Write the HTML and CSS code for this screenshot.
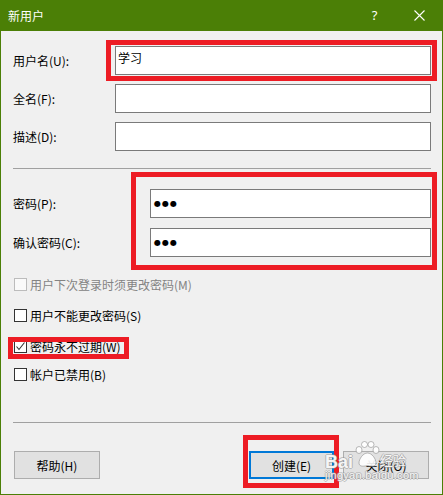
FILE: index.html
```html
<!DOCTYPE html>
<html lang="zh-CN">
<head>
    <meta charset="UTF-8">
    <title>新用户</title>
    <link rel="stylesheet" href="styles.css">
</head>
<body>
    <div class="window">
        <div class="titlebar">
            <span class="title">新用户</span>
            <span class="ctrl help">?</span>
            <span class="ctrl close">
                <svg width="11" height="11" viewBox="0 0 11 11">
                    <path d="M0.5 0.5 L10.5 10.5 M10.5 0.5 L0.5 10.5" stroke="#fff" stroke-width="1.1" fill="none" />
                </svg>
            </span>
        </div>

        <div class="client">
            <div class="fields account">
                <label>用户名(U):</label>
                <div class="input">学习</div>
                <label>全名(F):</label>
                <div class="input"></div>
                <label>描述(D):</label>
                <div class="input"></div>
            </div>

            <div class="sep"></div>

            <div class="fields password">
                <label>密码(P):</label>
                <div class="input"><span class="dots">●●●</span></div>
                <label>确认密码(C):</label>
                <div class="input"><span class="dots">●●●</span></div>
            </div>

            <div class="checks">
                <div class="check disabled"><span class="box"></span>用户下次登录时须更改密码(M)</div>
                <div class="check"><span class="box"></span>用户不能更改密码(S)</div>
                <div class="check">
                    <span class="box">
                        <svg width="11" height="11" viewBox="0 0 11 11">
                            <path d="M1.5 5.5 L4 8.5 L9.5 1.5" stroke="#333" stroke-width="1.1" fill="none" />
                        </svg>
                    </span>密码永不过期(W)
                </div>
                <div class="check last"><span class="box"></span>帐户已禁用(B)</div>
            </div>

            <div class="footer">
                <div class="sep"></div>
                <div class="buttons">
                    <button class="btn">帮助(H)</button>
                    <span class="spacer"></span>
                    <button class="btn default">创建(E)</button>
                    <button class="btn">关闭(O)</button>
                </div>
            </div>
        </div>

        <!-- red annotation frames -->
        <div class="mark mark-user"></div>
        <div class="mark mark-pass"></div>
        <div class="mark mark-expire"></div>
        <div class="mark mark-create"></div>

        <!-- baidu jingyan watermark -->
        <div class="watermark">
            <div class="wm-row">
                <span class="wm-bai">Bai</span>
                <svg class="wm-paw" width="25" height="27" viewBox="0 0 25 27">
                    <g fill="rgba(255,255,255,0.9)" stroke="rgba(140,140,140,0.6)" stroke-width="1">
                        <ellipse cx="4" cy="9" rx="3" ry="3.5" />
                        <ellipse cx="9.5" cy="3.5" rx="3" ry="3" />
                        <ellipse cx="16" cy="3.5" rx="3" ry="3" />
                        <ellipse cx="21" cy="9" rx="3" ry="3.5" />
                        <path d="M12.5 12 C8 12 4 18 4 22 C4 25 7 26 12.5 24.5 C18 26 21 25 21 22 C21 18 17 12 12.5 12 Z" />
                    </g>
                </svg>
                <span class="wm-jy">经验</span>
            </div>
            <span class="wm-url">jingyan.baidu.com</span>
        </div>
    </div>
</body>
</html>
```

FILE: styles.css
```css
* {
    box-sizing: border-box;
}

body {
    margin: 0;
    background-color: #ffffff;
    font-family: "Noto Sans CJK SC", "Noto Sans", sans-serif;
    font-size: 12px;
    color: #000;
}

.window {
    position: relative;
    width: 443px;
    height: 495px;
    display: flex;
    flex-direction: column;
    background-color: #4b7f06;
    padding: 0 1px 1px;
    overflow: hidden;
}

.titlebar {
    height: 31px;
    display: flex;
    align-items: center;
    color: #fff;
}

.title {
    flex: 1;
    padding-left: 7px;
    line-height: 16px;
}

.ctrl {
    width: 45px;
    height: 31px;
    display: flex;
    align-items: center;
    justify-content: center;
}

.help {
    font-family: "Noto Sans", sans-serif;
    font-size: 13px;
    padding-bottom: 1px;
}

.close svg {
    display: block;
    margin-top: -1px;
}

.client {
    flex: 1;
    display: flex;
    flex-direction: column;
    background-color: #f0f0f0;
    padding: 15px 11px 15px 12px;
}

.fields {
    display: grid;
    align-items: center;
    row-gap: 9px;
}

.account {
    grid-template-columns: 102px 1fr;
}

.password {
    grid-template-columns: 137px 1fr;
    row-gap: 10px;
    margin-top: 20px;
}

.fields label {
    line-height: 16px;
}

.input {
    height: 29px;
    background-color: #fff;
    border: 1px solid #7a7a7a;
    padding: 3px 2px;
    line-height: 16px;
}

.dots {
    font-family: "DejaVu Sans", sans-serif;
    font-size: 8px;
    letter-spacing: 1px;
    line-height: 16px;
    padding-left: 1px;
}

.sep {
    height: 1px;
    background-color: #a0a0a0;
}

.account + .sep {
    margin-top: 17px;
}

.checks {
    margin-top: 19px;
    display: flex;
    flex-direction: column;
    gap: 14px;
}

.check {
    display: flex;
    align-items: center;
    line-height: 17px;
    height: 17px;
}

.check.last {
    margin-top: -3px;
}

.box {
    width: 13px;
    height: 13px;
    margin: 0 3px 0 1px;
    border: 1px solid #333;
    background-color: #fff;
    display: flex;
    align-items: center;
    justify-content: center;
}

.check.disabled {
    color: #838383;
}

.check.disabled .box {
    border-color: #bcbcbc;
    background-color: #fafafa;
}

.footer {
    margin-top: auto;
}

.buttons {
    display: flex;
    margin-top: 28px;
    padding: 0 2px 0 1px;
    gap: 9px;
}

.spacer {
    flex: 1;
}

.btn {
    width: 86px;
    height: 28px;
    background-color: #e1e1e1;
    border: 1px solid #adadad;
    font-family: inherit;
    font-size: 12px;
    color: #000;
    padding: 0;
}

.btn.default {
    border: 2px solid #0078d7;
    width: 85px;
}

.mark {
    position: absolute;
    border: 5px solid #ed1c24;
}

.mark-user {
    left: 106px;
    top: 40px;
    width: 331px;
    height: 41px;
}

.mark-pass {
    left: 131px;
    top: 172px;
    width: 306px;
    height: 98px;
}

.mark-expire {
    left: 8px;
    top: 337px;
    width: 121px;
    height: 22px;
}

.mark-create {
    left: 243px;
    top: 435px;
    width: 96px;
    height: 53px;
}

.watermark {
    position: absolute;
    left: 325px;
    top: 441px;
    display: flex;
    flex-direction: column;
    color: rgba(255, 255, 255, 0.92);
    text-shadow: 1px 0 0 rgba(150, 150, 150, 0.55), -1px 0 0 rgba(150, 150, 150, 0.55),
        0 1px 0 rgba(150, 150, 150, 0.55), 0 -1px 0 rgba(150, 150, 150, 0.55);
    pointer-events: none;
}

.wm-row {
    display: flex;
    align-items: flex-end;
    height: 27px;
}

.wm-bai {
    font-family: "Liberation Sans", sans-serif;
    font-weight: bold;
    font-size: 18px;
    line-height: 18px;
    margin-bottom: -3px;
}

.wm-paw {
    display: block;
    margin-left: 2px;
}

.wm-jy {
    font-family: "Noto Sans CJK SC", sans-serif;
    font-size: 13px;
    line-height: 16px;
}

.wm-url {
    font-family: "Liberation Sans", sans-serif;
    font-size: 11px;
    line-height: 13px;
    margin-top: 1px;
    letter-spacing: 0.3px;
}
```
